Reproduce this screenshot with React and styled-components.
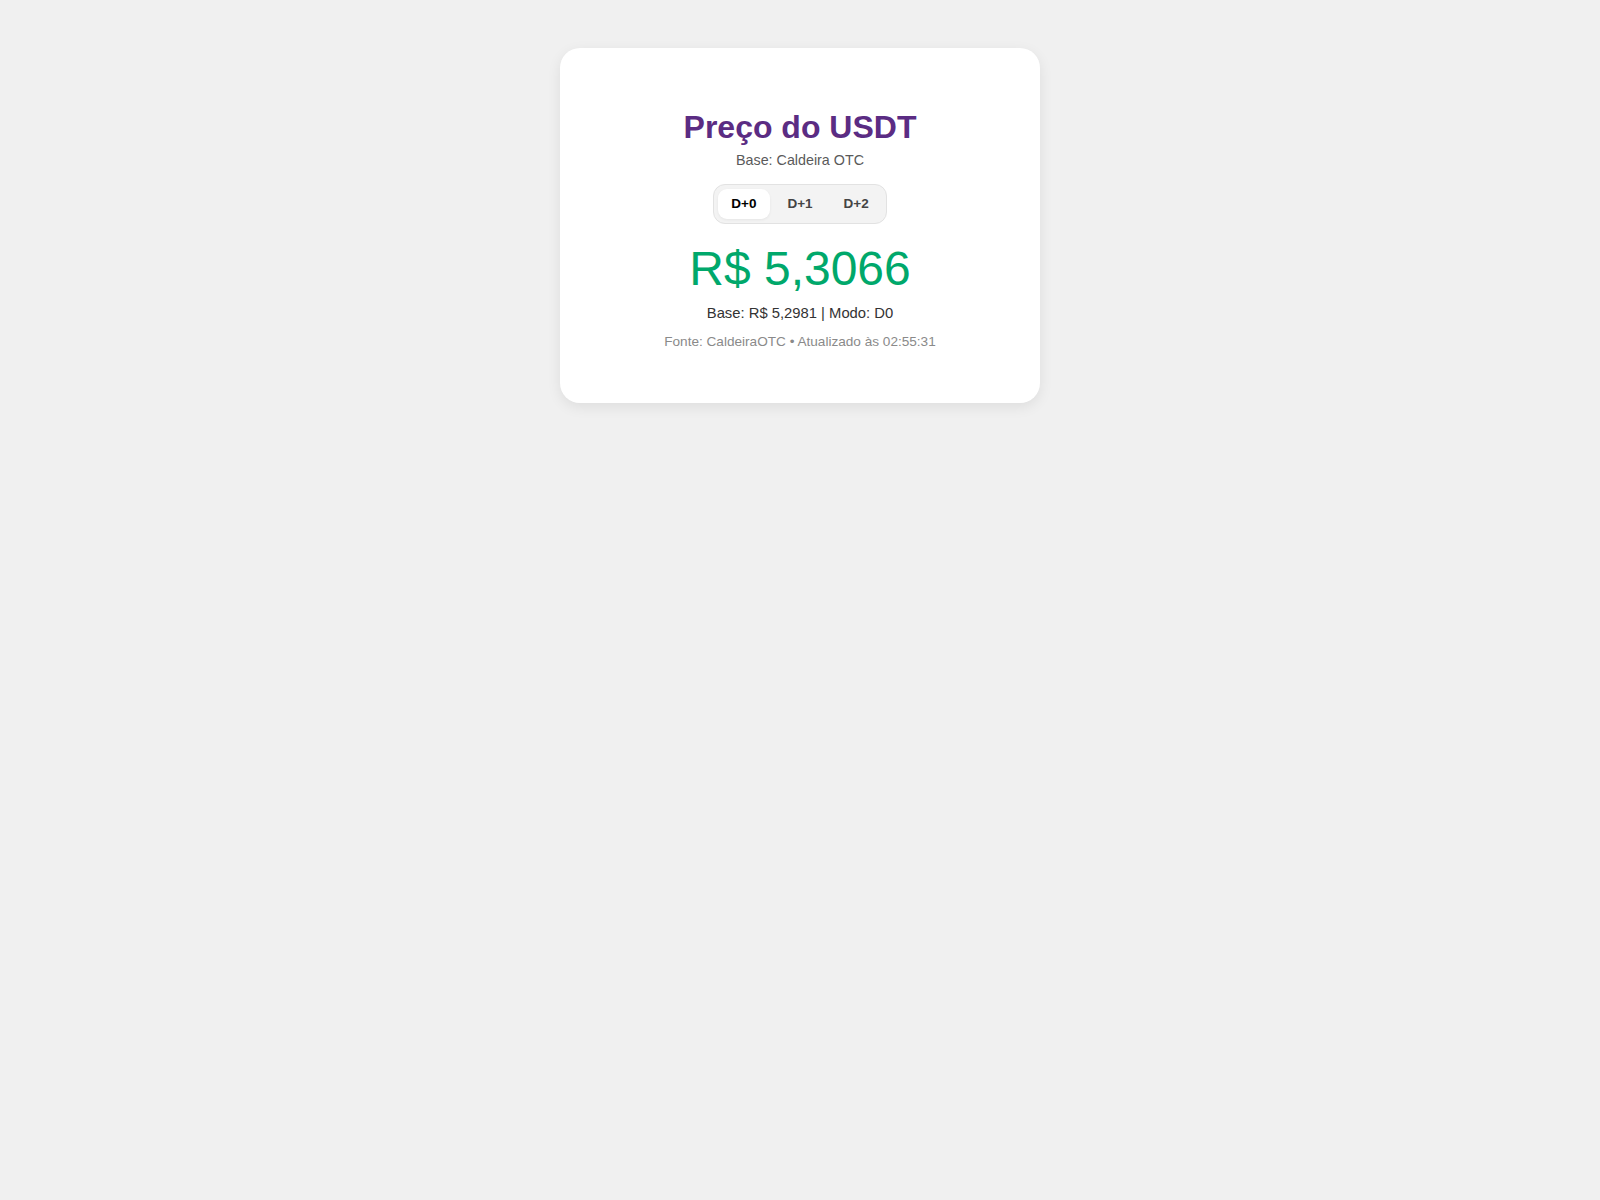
import React, { useState } from "react";
import styled, { createGlobalStyle } from "styled-components";

const Global = createGlobalStyle`
  html, body { margin: 0; padding: 0; background: #f0f0f0; }
  body { font-family: "Liberation Sans", Arial, sans-serif; }
`;

const Page = styled.div`
  display: flex;
  justify-content: center;
  padding-top: 48px;
  min-height: 1200px;
  box-sizing: border-box;
`;

const Card = styled.div`
  width: 480px;
  box-sizing: border-box;
  background: #fff;
  border-radius: 20px;
  box-shadow: 0 4px 14px rgba(0, 0, 0, 0.08);
  padding: 61px 30px 53px;
  display: flex;
  flex-direction: column;
  align-items: center;
  text-align: center;
  align-self: flex-start;
`;

const Title = styled.h1`
  margin: 0;
  font-size: 32px;
  font-weight: 700;
  color: #5b2c83;
  line-height: 37px;
`;

const Subtitle = styled.div`
  margin-top: 6px;
  font-size: 14.3px;
  line-height: 16px;
  color: #5a5a5a;
`;

const Tabs = styled.div`
  margin-top: 16px;
  display: flex;
  gap: 4px;
  padding: 4px;
  background: #f3f3f3;
  border: 1px solid #e2e2e2;
  border-radius: 12px;
`;

const Tab = styled.button`
  border: none;
  font-family: inherit;
  font-size: 13.5px;
  font-weight: 700;
  padding: 7px 13.5px;
  line-height: 16px;
  border-radius: 9px;
  cursor: pointer;
  background: ${(p) => (p.$active ? "#fff" : "transparent")};
  color: ${(p) => (p.$active ? "#000" : "#444")};
  box-shadow: ${(p) => (p.$active ? "0 1px 3px rgba(0,0,0,0.06)" : "none")};
`;

const Price = styled.div`
  margin-top: 17px;
  font-size: 48px;
  line-height: 55px;
  color: #00a86b;
`;

const Info = styled.div`
  margin-top: 9px;
  font-size: 14.8px;
  line-height: 17px;
  color: #333;
`;

const Footer = styled.div`
  margin-top: 12px;
  font-size: 13.6px;
  line-height: 16px;
  color: #8a8a8a;
`;

export default function App() {
  const [mode, setMode] = useState(0);
  return (
    <>
      <Global />
      <Page>
        <Card>
          <Title>Preço do USDT</Title>
          <Subtitle>Base: Caldeira OTC</Subtitle>
          <Tabs>
            {["D+0", "D+1", "D+2"].map((t, i) => (
              <Tab key={t} $active={mode === i} onClick={() => setMode(i)}>
                {t}
              </Tab>
            ))}
          </Tabs>
          <Price>R$ 5,3066</Price>
          <Info>Base: R$ 5,2981 | Modo: D0</Info>
          <Footer>Fonte: CaldeiraOTC • Atualizado às 02:55:31</Footer>
        </Card>
      </Page>
    </>
  );
}
